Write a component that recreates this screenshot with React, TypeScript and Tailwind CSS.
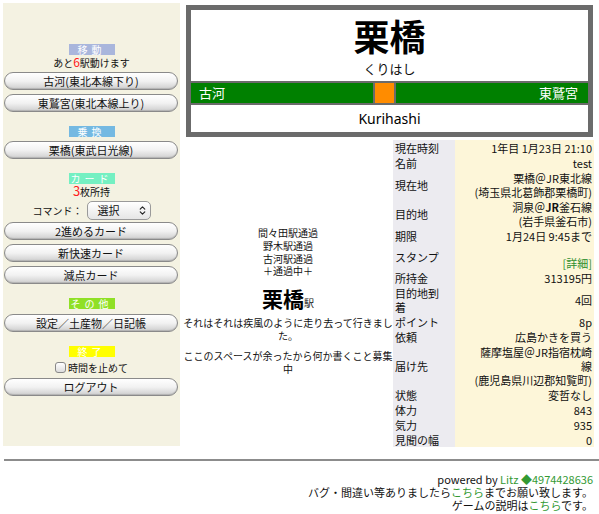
import { ChevronsUpDown } from "lucide-react";

const jp = "font-['Noto_Sans_CJK_JP','Noto_Sans',sans-serif]";

function Badge({ label, color }: { label: string; color: string }) {
  return (
    <div className="flex justify-center">
      <div className={`w-[46px] h-[11px] flex items-center justify-center text-white text-[10px] leading-none tracking-[4px] ${color}`}>
        {label}
      </div>
    </div>
  );
}

function Btn({ label, className = "" }: { label: string; className?: string }) {
  return (
    <button
      className={`ml-[1px] w-[174px] h-[18px] rounded-full border border-[#8a8a8a] bg-gradient-to-b from-white via-[#f2f2f2] to-[#cfcfcf] text-[11px] leading-none text-[#111] flex items-center justify-center shadow-[inset_0_-1px_1px_rgba(0,0,0,0.15)] ${className}`}
    >
      {label}
    </button>
  );
}

const rows: { k: string[]; v: React.ReactNode; h?: string; vAlign?: string }[] = [
  { k: ["現在時刻"], v: "1年目 1月23日 21:10" },
  { k: ["名前"], v: "test" },
  { k: ["現在地"], v: (<>栗橋＠JR東北線<br />(埼玉県北葛飾郡栗橋町)</>) },
  { k: ["目的地"], v: (<>洞泉＠<b>JR</b>釜石線<br />(岩手県釜石市)</>) },
  { k: ["期限"], v: "1月24日 9:45まで" },
  { k: ["スタンプ"], v: <span className="text-[#2f8f2f]">[詳細]</span>, h: "h-[27px]", vAlign: "align-bottom" },
  { k: ["所持金"], v: "313195円" },
  { k: ["目的地到", "着"], v: "4回" },
  { k: ["ポイント"], v: "8p" },
  { k: ["依頼"], v: "広島かきを買う" },
  { k: ["届け先"], v: (<>薩摩塩屋＠JR指宿枕崎<br />線<br />(鹿児島県川辺郡知覧町)</>) },
  { k: ["状態"], v: "変哲なし" },
  { k: ["体力"], v: "843" },
  { k: ["気力"], v: "935" },
  { k: ["見聞の幅"], v: "0" },
];

export default function App() {
  return (
    <div className={`w-[599px] h-[514px] bg-white text-[11px] text-[#111] ${jp}`}>
      <div className="flex pt-[3px] pl-[3px]">
        {/* left menu */}
        <div className="w-[177px] h-[443px] bg-[#f4f2e2] flex flex-col">
          <div className="mt-[41px]">
            <Badge label="移動" color="bg-[#a9b6dc]" />
          </div>
          <div className="text-center text-[10px] leading-[12px] mt-[1px]">
            あと<span className="text-[#ff2020] text-[12px]">6</span>駅動けます
          </div>
          <Btn label="古河(東北本線下り)" className="mt-[3px]" />
          <Btn label="東鷲宮(東北本線上り)" className="mt-[4px]" />

          <div className="mt-[14px]">
            <Badge label="乗換" color="bg-[#74b9e2]" />
          </div>
          <Btn label="栗橋(東武日光線)" className="mt-[4px]" />

          <div className="mt-[14px]">
            <Badge label="カード" color="bg-[#74f0c2]" />
          </div>
          <div className="text-center text-[10px] leading-[12px] mt-[1px]">
            <span className="text-[#ff2020] text-[13px]">3</span>枚所持
          </div>
          <div className="flex items-center justify-center mt-[2px] h-[20px]">
            <span className="text-[10px] mr-[4px]">コマンド：</span>
            <div className="w-[64px] h-[19px] rounded-[5px] border border-[#9a9a9a] bg-gradient-to-b from-white to-[#e6e6e6] flex items-center justify-between pl-[10px] pr-[2px] text-[11px]">
              <span>選択</span>
              <ChevronsUpDown size={11} strokeWidth={2.5} className="text-[#222]" />
            </div>
          </div>
          <Btn label="2進めるカード" className="mt-[2px]" />
          <Btn label="新快速カード" className="mt-[4px]" />
          <Btn label="減点カード" className="mt-[4px]" />

          <div className="mt-[14px]">
            <Badge label="その他" color="bg-[#8fe026]" />
          </div>
          <Btn label="設定／土産物／日記帳" className="mt-[5px]" />

          <div className="mt-[14px]">
            <Badge label="終了" color="bg-[#ffff00]" />
          </div>
          <div className="flex items-center justify-center mt-[4px] h-[12px] text-[10px]">
            <span className="w-[11px] h-[11px] rounded-[3px] border border-[#888] bg-gradient-to-b from-white to-[#ddd] mr-[2px]" />
            時間を止めて
          </div>
          <Btn label="ログアウト" className="mt-[5px]" />
        </div>

        {/* right block */}
        <div className="w-[411px] ml-[3px]">
          {/* station sign */}
          <div className="mt-[2px] ml-[3px] w-[407px] h-[132px] border-[5px] border-[#6b6b6b] bg-white flex flex-col">
            <div className="h-[71px] flex flex-col items-center">
              <div className="text-[36px] font-bold leading-none mt-[7px] text-black">栗橋</div>
              <div className="text-[13px] leading-none mt-[9px]">くりはし</div>
            </div>
            <div className="h-[24px] border-y-2 border-[#6b6b6b] bg-[#008000] flex items-center text-white text-[13px] relative">
              <span className="ml-[8px]">古河</span>
              <span className="ml-auto mr-[10px]">東鷲宮</span>
              <div className="absolute left-[182px] top-0 w-[23px] h-[20px] bg-[#ff8c00] border-x-2 border-[#6b6b6b]" />
            </div>
            <div className="flex-1 flex items-center justify-center text-[14px] font-['Noto_Sans',sans-serif] text-black">
              Kurihashi
            </div>
          </div>

          <div className="flex mt-[3px]">
            {/* middle */}
            <div className="w-[210px] pt-[16px] flex flex-col justify-center text-center text-[10px] leading-[12.7px]">
              <div>間々田駅通過</div>
              <div>野木駅通過</div>
              <div>古河駅通過</div>
              <div>＋通過中＋</div>
              <div className="mt-[8px] leading-[24px]">
                <span className="text-[21px] font-bold text-black">栗橋</span>
                <span className="text-[10px]">駅</span>
              </div>
              <div className="mt-[2px]">それはそれは疾風のように走り去って行きました。</div>
              <div className="mt-[8px]">ここのスペースが余ったから何か書くこと募集中</div>
            </div>

            {/* status table */}
            <table className="w-[201px] border-collapse text-[11px] leading-[14px]">
              <tbody>
                {rows.map((r) => (
                  <tr key={r.k.join("")} className={r.h ?? ""}>
                    <td className="w-[62px] bg-[#ecebf0] pl-[2px] py-[0.5px] align-middle">
                      {r.k.map((t) => (
                        <div key={t}>{t}</div>
                      ))}
                    </td>
                    <td className={`bg-[#fdf6d9] text-right pr-[2px] py-[0.5px] ${r.vAlign ?? "align-middle"}`}>
                      {r.v}
                    </td>
                  </tr>
                ))}
              </tbody>
            </table>
          </div>
        </div>
      </div>

      {/* footer */}
      <div className="ml-[4px] mt-[12px] border-t-2 border-[#8c8c8c]" />
      <div className="text-right pr-[6px] pt-[12px] text-[11px] leading-[13px]">
        <div>
          powered by <span className="text-[#339933]">Litz ◆4974428636</span>
        </div>
        <div>
          バグ・間違い等ありましたら<span className="text-[#339933]">こちら</span>までお願い致します。
        </div>
        <div>
          ゲームの説明は<span className="text-[#339933]">こちら</span>です。
        </div>
      </div>
    </div>
  );
}
